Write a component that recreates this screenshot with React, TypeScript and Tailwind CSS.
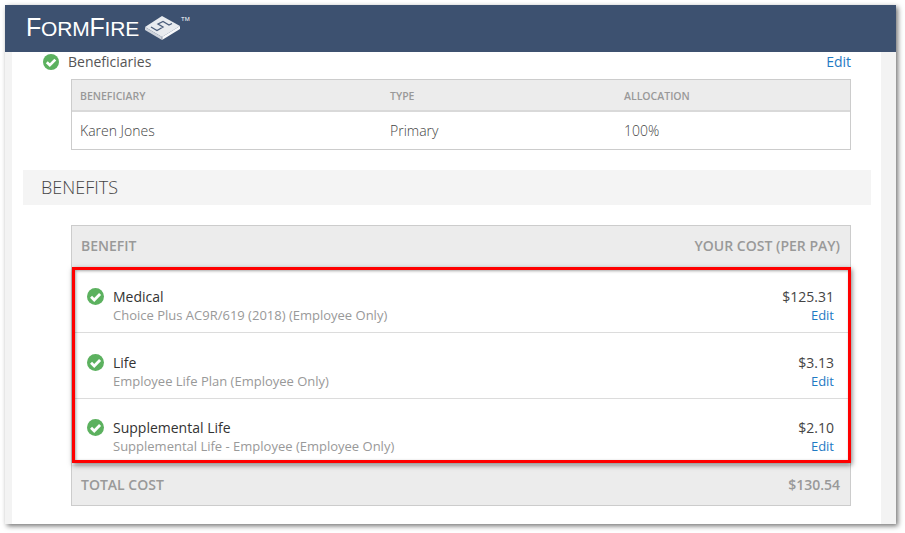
const OPEN_SANS = "font-['Open_Sans',sans-serif]";

function Check({ className }: { className?: string }) {
  return (
    <svg viewBox="0 0 16 16" className={className}>
      <circle cx="8" cy="8" r="8" fill="#5cb15f" />
      <path d="M3.800 8.200 L6.800 11.200 L12.300 5.600" fill="none" stroke="#fff" strokeWidth="2.700" />
    </svg>
  );
}

function Logo() {
  return (
    <div className="flex items-start text-white font-['Liberation_Sans',sans-serif]">
      <div className="flex items-baseline leading-none tracking-[-0.2px] mt-[10px]">
        <span className="text-[25px]">F</span>
        <span className="text-[21px]">ORM</span>
        <span className="text-[25px]">F</span>
        <span className="text-[21px]">IRE</span>
      </div>
      <svg viewBox="0 0 37 26" className="w-[37px] h-[26px] ml-[5px] mt-[10px]">
        <path d="M18 1 L36 11 L18 22 L1 12 Z" fill="#e8ebef" />
        <path d="M1 12 L1 15 L18 25 L18 22 Z" fill="#cfd4dc" />
        <path d="M36 11 L36 14 L18 25 L18 22 Z" fill="#f7f8fa" />
        <path
          d="M7 12 L13 15.500 L19 12 L14 9 L19 6.500 L25 10 L28 8.500"
          fill="none"
          stroke="#4a5d7b"
          strokeWidth="1.300"
        />
        <path d="M18 22 L18 25" stroke="#7c8798" strokeWidth="0.800" />
      </svg>
      <span className="text-[6px] leading-none ml-[0px] mt-[11px]">TM</span>
    </div>
  );
}

const rows = [
  { name: "Medical", plan: "Choice Plus AC9R/619 (2018) (Employee Only)", cost: "$125.31" },
  { name: "Life", plan: "Employee Life Plan (Employee Only)", cost: "$3.13" },
  { name: "Supplemental Life", plan: "Supplemental Life - Employee (Employee Only)", cost: "$2.10" },
];

export default function App() {
  return (
    <div className={`${OPEN_SANS} w-[905px] h-[533px] bg-white pt-[5px] pl-[5px] overflow-hidden`}>
      <div className="w-[891px] h-[519px] flex flex-col bg-white shadow-[2px_2px_5px_rgba(0,0,0,0.55)]">
        <header className="h-[47px] shrink-0 bg-[#3d5170] pl-[21px]">
          <Logo />
        </header>

        <div className="flex flex-1 min-h-0">
          <div className="w-[7px] bg-[#f3f3f3]" />

          <main className="w-[869px] bg-white">
            <div className="h-[27px] flex items-start pl-[31px] pr-[30px] leading-[20px]">
              <Check className="w-[16px] h-[16px] mt-[2px]" />
              <span className="ml-[9px] text-[14px] text-[#555]">Beneficiaries</span>
              <a className="ml-auto text-[14px] text-[#1f7ac4]">Edit</a>
            </div>

            <div className="ml-[59px] w-[780px] border border-[#cccccc]">
              <div className="h-[32px] pt-[4px] bg-[#ececec] border-b-2 border-[#d9d9d9] flex items-center pl-[8px] text-[10.500px] font-semibold text-[#999]">
                <span className="w-[310px]">BENEFICIARY</span>
                <span className="w-[234px]">TYPE</span>
                <span>ALLOCATION</span>
              </div>
              <div className="h-[37px] flex items-center pl-[8px] text-[14px] font-light text-[#444]">
                <span className="w-[310px]">Karen Jones</span>
                <span className="w-[234px]">Primary</span>
                <span>100%</span>
              </div>
            </div>

            <div className="mt-[20px] ml-[11px] w-[848px] h-[35px] bg-[#f4f4f4] flex items-center pl-[18px] text-[18px] font-light text-[#444]">
              BENEFITS
            </div>

            <div className="relative mt-[20px] ml-[59px] w-[780px] border border-[#cccccc] bg-[#ececec]">
              <div className="h-[41px] pb-[2px] flex items-center justify-between pl-[9px] pr-[10px] text-[14px] font-semibold text-[#999]">
                <span>BENEFIT</span>
                <span>YOUR COST (PER PAY)</span>
              </div>

              <div className="bg-white">
                {rows.map((row) => (
                  <div
                    key={row.name}
                    className="h-[66px] flex items-start pt-[20px] pl-[15px] pr-[16px] border-b border-[#dcdcdc] last:border-b-0 last:pt-[19px]"
                  >
                    <Check className="w-[17px] h-[17px] mt-[1px]" />
                    <div className="ml-[9px]">
                      <div className="text-[14px] leading-[19px] text-[#333]">{row.name}</div>
                      <div className="text-[13px] leading-[18px] text-[#999]">{row.plan}</div>
                    </div>
                    <div className="ml-auto text-right">
                      <div className="text-[14px] leading-[19px] text-[#444]">{row.cost}</div>
                      <a className="block text-[13px] leading-[18px] text-[#1f7ac4]">Edit</a>
                    </div>
                  </div>
                ))}
              </div>

              <div className="h-[40px] pb-[2px] flex items-center justify-between pl-[9px] pr-[10px] text-[14px] font-semibold text-[#999]">
                <span>TOTAL COST</span>
                <span>$130.54</span>
              </div>

              {/* annotation box drawn over the rows */}
              <div className="absolute top-[41px] left-0 -right-[1px] h-[196px] border-[3px] border-[#ff0000] shadow-[1px_2px_5px_rgba(0,0,0,0.5),inset_1px_1px_3px_rgba(0,0,0,0.35)]" />
            </div>
          </main>

          <div className="w-[15px] bg-[#f3f3f3]" />
        </div>
      </div>
    </div>
  );
}
